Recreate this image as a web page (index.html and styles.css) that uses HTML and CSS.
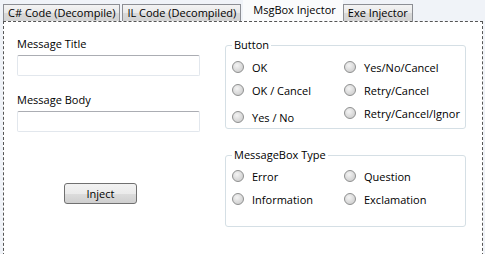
FILE: index.html
```html
<!DOCTYPE html>
<html lang="en">
<head>
    <meta charset="UTF-8">
    <title>MsgBox Injector</title>
    <link rel="stylesheet" href="styles.css">
</head>
<body>
    <div class="tabs">
        <div class="tab">C# Code (Decompile)</div>
        <div class="tab">IL Code (Decompiled)</div>
        <div class="tab active">MsgBox Injector</div>
        <div class="tab">Exe Injector</div>
    </div>

    <div class="panel">
        <div class="left">
            <label class="label">Message Title</label>
            <input class="field" type="text">

            <label class="label second">Message Body</label>
            <input class="field" type="text">

            <button class="inject">Inject</button>
        </div>

        <div class="right">
            <fieldset class="group">
                <legend>Button</legend>
                <div class="options">
                    <div class="col">
                        <div class="opt"><span class="radio"></span>OK</div>
                        <div class="opt"><span class="radio"></span>OK / Cancel</div>
                        <div class="opt low"><span class="radio"></span>Yes / No</div>
                    </div>
                    <div class="col">
                        <div class="opt"><span class="radio"></span>Yes/No/Cancel</div>
                        <div class="opt"><span class="radio"></span>Retry/Cancel</div>
                        <div class="opt"><span class="radio"></span>Retry/Cancel/Ignor</div>
                    </div>
                </div>
            </fieldset>

            <fieldset class="group type">
                <legend>MessageBox Type</legend>
                <div class="options">
                    <div class="col">
                        <div class="opt"><span class="radio"></span>Error</div>
                        <div class="opt"><span class="radio"></span>Information</div>
                    </div>
                    <div class="col">
                        <div class="opt"><span class="radio"></span>Question</div>
                        <div class="opt"><span class="radio"></span>Exclamation</div>
                    </div>
                </div>
            </fieldset>
        </div>
    </div>
</body>
</html>
```

FILE: styles.css
```css
body {
    margin: 0;
    width: 485px;
    height: 254px;
    overflow: hidden;
    background-color: #f0f3f8;
    font-family: "Open Sans", sans-serif;
    font-size: 11px;
    color: #000;
}
.tabs {
    display: flex;
    align-items: flex-end;
    height: 21px;
    padding-left: 3px;
}
.tab {
    height: 17px;
    line-height: 16px;
    padding: 0 4px;
    margin-right: 2px;
    border: 1px solid #8c8e94;
    border-bottom: none;
    background: linear-gradient(#f3f3f3, #e9e9e9 50%, #d9d9d9 51%, #d3d3d3);
    box-sizing: border-box;
    white-space: nowrap;
}
.tab.active {
    height: 21px;
    line-height: 18px;
    padding: 0 6px 0 9px;
    margin-right: 0;
    border-color: transparent;
    background: #fafbfc;
}
.panel {
    display: flex;
    margin: 0 2px 0 3px;
    height: 240px;
    border: 1px dashed #555;
    background-color: #fff;
    box-sizing: border-box;
}
.left {
    display: flex;
    flex-direction: column;
    width: 183px;
    margin-left: 13px;
    padding-top: 14px;
}
.label {
    line-height: 16px;
    margin-bottom: 3px;
}
.label.second {
    margin-top: 16px;
}
.field {
    height: 21px;
    margin: 0;
    border: 1px solid #e2e7ed;
    border-top-color: #abadb3;
    border-radius: 2px;
    box-sizing: border-box;
}
.inject {
    align-self: flex-start;
    width: 73px;
    height: 21px;
    margin: 51px 0 0 47px;
    padding: 0;
    font-family: inherit;
    font-size: 11px;
    color: #000;
    border: 1px solid #707070;
    border-radius: 3px;
    background: linear-gradient(#f2f2f2, #ebebeb 50%, #dddddd 51%, #cfcfcf);
}
.right {
    width: 241px;
    margin-left: 25px;
    padding-top: 16px;
}
.group {
    margin: 0;
    padding: 0 0 0 6px;
    height: 91px;
    border: 1px solid #d5dfe5;
    border-radius: 3px;
    box-sizing: border-box;
}
.group legend {
    margin-left: 0;
    padding: 0 2px;
    line-height: 14px;
}
.group .options {
    margin-top: 7px;
}
.group.type {
    margin-top: 19px;
    height: 79px;
}
.group.type .options {
    margin-top: 6px;
}
.options {
    display: flex;
}
.col {
    display: flex;
    flex-direction: column;
    gap: 7px;
    width: 112px;
}
.opt {
    display: flex;
    align-items: center;
    height: 16px;
    white-space: nowrap;
}
.opt.low {
    margin-top: 4px;
}
.radio {
    flex-shrink: 0;
    width: 10px;
    height: 10px;
    margin-right: 8px;
    border: 1px solid #8e8f8f;
    border-radius: 50%;
    background: radial-gradient(circle at 40% 35%, #f4f4f4, #dadada 55%, #c8c8c8);
}
```
